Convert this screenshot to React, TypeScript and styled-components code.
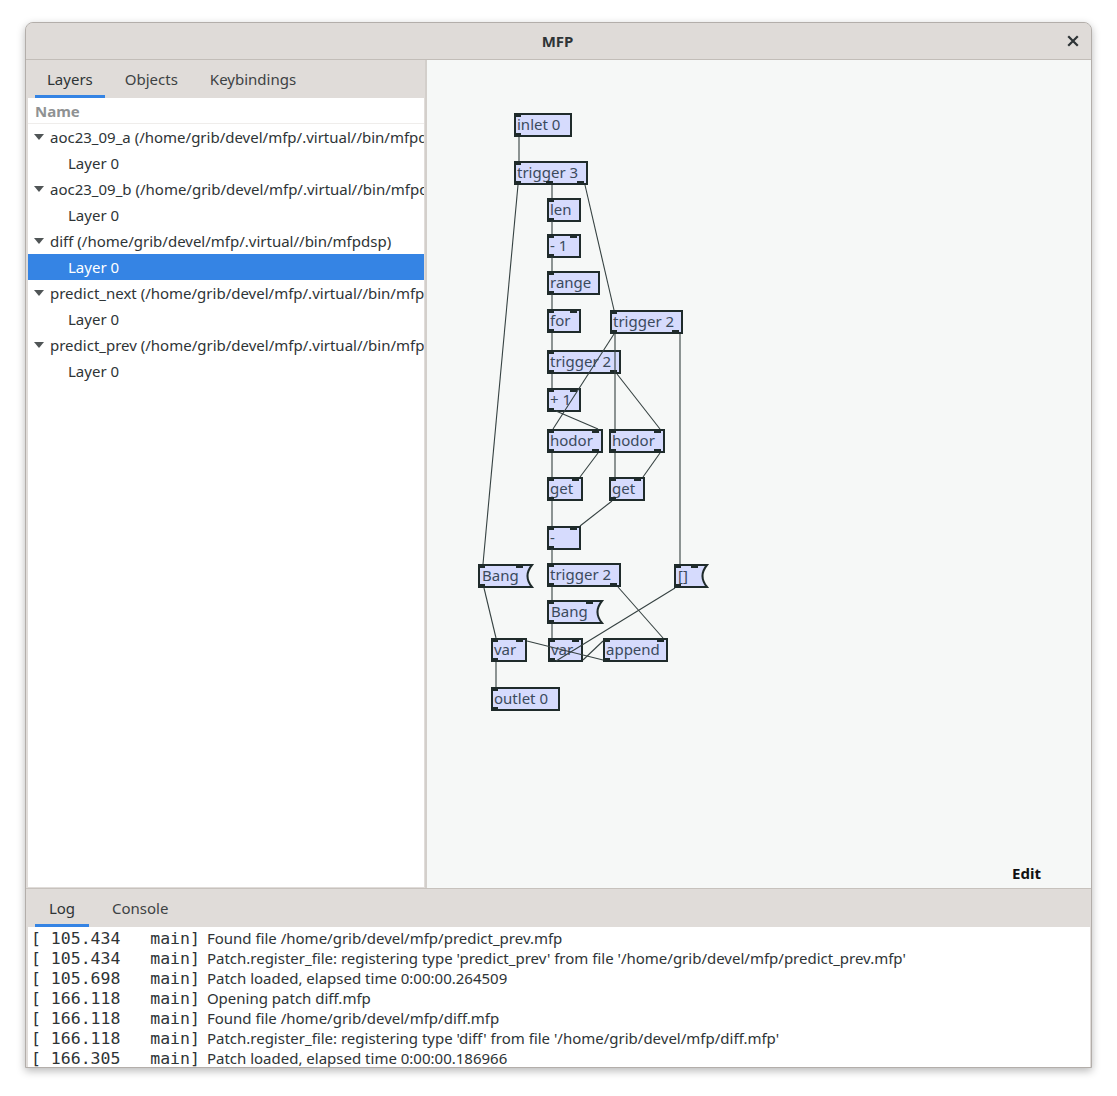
import React from 'react';
import styled, { createGlobalStyle } from 'styled-components';

const UI_FONT = `"Noto Sans", "Open Sans", "DejaVu Sans", sans-serif`;
const MONO = `"DejaVu Sans Mono", "Liberation Mono", monospace`;

const GlobalStyle = createGlobalStyle`
  html, body { margin: 0; padding: 0; background: #ffffff; }
  body { font-family: ${UI_FONT}; color: #2e3436; }
  * { box-sizing: border-box; }
`;

const Page = styled.div`
  padding: 22px 0 0 25px;
  width: 1117px;
  height: 1096px;
`;

const Window = styled.div`
  width: 1067px;
  height: 1046px;
  display: flex;
  flex-direction: column;
  border: 1px solid #b3aeaa;
  border-radius: 8px 8px 0 0;
  background: #e0dcd9;
  box-shadow: 0 3px 9px rgba(0, 0, 0, 0.28);
  overflow: hidden;
`;

const TitleBar = styled.header`
  height: 37px;
  flex: none;
  display: grid;
  grid-template-columns: 1fr auto 1fr;
  align-items: center;
  padding: 0 7px;
  background: #dfdbd8;
  border-bottom: 1px solid #c2bdb8;
`;

const Title = styled.div`
  grid-column: 2;
  font-size: 15px;
  font-weight: 700;
  color: #2e3436;
  margin-right: 2px;
`;

const CloseButton = styled.div`
  grid-column: 3;
  justify-self: end;
  width: 22px;
  height: 22px;
  display: flex;
  align-items: center;
  justify-content: center;
`;

const Main = styled.div`
  height: 828px;
  flex: none;
  display: flex;
`;

const LeftPane = styled.div`
  width: 399px;
  flex: none;
  display: flex;
  flex-direction: column;
  background: #e0dcd9;
`;

const TabBar = styled.div<{ $gap?: number }>`
  height: 38px;
  flex: none;
  display: flex;
  align-items: stretch;
  gap: ${(p) => p.$gap ?? 8}px;
  padding-left: 9px;
  background: #e0dcd9;
`;

const Tab = styled.div<{ $active?: boolean }>`
  min-width: 54px;
  padding: 0 12px;
  display: flex;
  align-items: center;
  justify-content: center;
  font-size: 15px;
  color: ${(p) => (p.$active ? '#2e3436' : '#3d4244')};
  box-shadow: ${(p) => (p.$active ? 'inset 0 -3px 0 #3584e4' : 'none')};
`;

const Tree = styled.div`
  flex: 1;
  margin: 0 1px 1px 2px;
  background: #ffffff;
  overflow: hidden;
`;

const TreeHeader = styled.div`
  height: 26px;
  display: flex;
  align-items: center;
  padding-left: 7px;
  font-size: 15px;
  font-weight: 700;
  color: #8f9293;
  border-bottom: 1px solid #efedeb;
`;

const TreeRow = styled.div<{ $child?: boolean; $selected?: boolean }>`
  height: 26px;
  display: flex;
  align-items: center;
  gap: 6px;
  padding-left: ${(p) => (p.$child ? '40px' : '6px')};
  font-size: 15px;
  white-space: nowrap;
  overflow: hidden;
  background: ${(p) => (p.$selected ? '#3584e4' : 'transparent')};
  color: ${(p) => (p.$selected ? '#ffffff' : '#2e3436')};
`;

const Expander = styled.span`
  flex: none;
  width: 0;
  height: 0;
  border-left: 5px solid transparent;
  border-right: 5px solid transparent;
  border-top: 6px solid #505556;
`;

const PaneSeparator = styled.div`
  width: 2px;
  flex: none;
  background: #d3cfcb;
`;

const Canvas = styled.div`
  position: relative;
  flex: 1;
  background: #f6f8f7;
  overflow: hidden;
`;

const Wires = styled.svg`
  position: absolute;
  left: 0;
  top: 0;
  width: 100%;
  height: 100%;
  pointer-events: none;
`;

const ObjBox = styled.div`
  position: absolute;
  height: 24px;
  background: #d6dbfd;
  border: 2px solid #1f2b2b;
  font-family: ${UI_FONT};
  font-size: 15px;
  line-height: 18px;
  color: #3b4a5c;
  padding-left: 1px;
  white-space: nowrap;
`;

const MsgBox = styled.div`
  position: absolute;
  height: 24px;
  font-family: ${UI_FONT};
  font-size: 15px;
  line-height: 22px;
  color: #3b4a5c;
  white-space: nowrap;
`;

const MsgShape = styled.svg`
  position: absolute;
  left: 0;
  top: 0;
  overflow: visible;
`;

const MsgLabel = styled.span`
  position: relative;
  padding-left: 4px;
`;

const Port = styled.span<{ $top: boolean }>`
  position: absolute;
  width: 7px;
  height: 4px;
  background: #1f2b2b;
  ${(p) => (p.$top ? 'top: -2px;' : 'bottom: -2px;')}
`;

const MsgPort = styled(Port)`
  ${(p) => (p.$top ? 'top: 0;' : 'bottom: 0;')}
`;

const ModeLabel = styled.div`
  position: absolute;
  right: 50px;
  bottom: 5px;
  font-size: 15px;
  font-weight: 700;
  color: #111;
`;

const HSeparator = styled.div`
  height: 1px;
  flex: none;
  background: #c7c2bd;
`;

const LogArea = styled.div`
  flex: 1;
  margin: 0 1px 0 2px;
  background: #ffffff;
  padding: 1px 0 0 3px;
  overflow: hidden;
`;

const LogLine = styled.div`
  height: 20px;
  display: flex;
  align-items: center;
  white-space: pre;
`;

const LogPrefix = styled.span`
  font-family: ${MONO};
  font-size: 16.5px;
  color: #2e3436;
`;

const LogMsg = styled.span`
  font-family: ${UI_FONT};
  font-size: 15px;
  color: #2e3436;
  margin-left: 7px;
`;

type NodeData = {
  label: string;
  x: number;
  y: number;
  w: number;
  ins: number;
  outs: number;
  msg?: boolean;
};

const OX = 427;
const OY = 60;

const nodes: NodeData[] = [
  { label: 'inlet 0', x: 514, y: 113, w: 58, ins: 1, outs: 1 },
  { label: 'trigger 3', x: 514, y: 161, w: 74, ins: 1, outs: 3 },
  { label: 'len', x: 547, y: 198, w: 34, ins: 1, outs: 1 },
  { label: '- 1', x: 547, y: 234, w: 34, ins: 2, outs: 1 },
  { label: 'range', x: 547, y: 271, w: 53, ins: 1, outs: 1 },
  { label: 'for', x: 547, y: 309, w: 34, ins: 2, outs: 1 },
  { label: 'trigger 2', x: 610, y: 310, w: 73, ins: 1, outs: 2 },
  { label: 'trigger 2', x: 547, y: 350, w: 74, ins: 1, outs: 2 },
  { label: '+ 1', x: 547, y: 388, w: 34, ins: 2, outs: 1 },
  { label: 'hodor', x: 547, y: 429, w: 56, ins: 2, outs: 2 },
  { label: 'hodor', x: 609, y: 429, w: 56, ins: 2, outs: 2 },
  { label: 'get', x: 547, y: 477, w: 36, ins: 2, outs: 1 },
  { label: 'get', x: 609, y: 477, w: 36, ins: 2, outs: 1 },
  { label: '-', x: 547, y: 526, w: 34, ins: 2, outs: 1 },
  { label: 'Bang', x: 478, y: 564, w: 55, ins: 2, outs: 1, msg: true },
  { label: 'trigger 2', x: 547, y: 563, w: 74, ins: 1, outs: 2 },
  { label: '[]', x: 674, y: 564, w: 34, ins: 2, outs: 1, msg: true },
  { label: 'Bang', x: 547, y: 600, w: 56, ins: 2, outs: 1, msg: true },
  { label: 'var', x: 491, y: 638, w: 36, ins: 2, outs: 1 },
  { label: 'var', x: 548, y: 638, w: 35, ins: 2, outs: 1 },
  { label: 'append', x: 603, y: 638, w: 65, ins: 2, outs: 1 },
  { label: 'outlet 0', x: 491, y: 687, w: 69, ins: 1, outs: 1 },
];

const wires: [number, number, number, number][] = [
  [519, 137, 519, 161],
  [518, 185, 483, 564],
  [552, 185, 552, 198],
  [585, 185, 614, 310],
  [552, 221, 552, 234],
  [552, 257, 552, 271],
  [552, 294, 552, 309],
  [552, 333, 552, 350],
  [552, 374, 552, 388],
  [614, 334, 553, 429],
  [615, 334, 615, 429],
  [617, 374, 660, 429],
  [556, 411, 598, 429],
  [552, 453, 552, 477],
  [598, 453, 580, 477],
  [615, 453, 615, 477],
  [660, 453, 643, 477],
  [552, 501, 552, 526],
  [612, 501, 580, 526],
  [552, 549, 552, 563],
  [680, 334, 680, 564],
  [552, 587, 552, 600],
  [618, 587, 663, 638],
  [675, 588, 556, 661],
  [552, 624, 552, 638],
  [484, 588, 496, 638],
  [527, 641, 603, 660],
  [583, 660, 603, 641],
  [496, 662, 496, 687],
];

function portXs(n: number, w: number, inset: number): number[] {
  if (n <= 1) return [0];
  const span = w - inset - 7;
  return Array.from({ length: n }, (_, i) => (span * i) / (n - 1));
}

function PatchNode({ node }: { node: NodeData }) {
  const pos = { left: node.x - OX, top: node.y - OY, width: node.w };
  if (node.msg) {
    const w = node.w;
    const ins = portXs(node.ins, w, 10);
    const outs = portXs(node.outs, w, 10);
    return (
      <MsgBox style={pos}>
        <MsgShape width={w} height={24}>
          <path
            d={`M1 1 H${w - 1} Q${w - 10} 12 ${w - 1} 23 H1 Z`}
            fill="#d6dbfd"
            stroke="#1f2b2b"
            strokeWidth={2}
          />
        </MsgShape>
        {ins.map((x, i) => (
          <MsgPort key={`i${i}`} $top style={{ left: x }} />
        ))}
        {outs.map((x, i) => (
          <MsgPort key={`o${i}`} $top={false} style={{ left: x }} />
        ))}
        <MsgLabel>{node.label}</MsgLabel>
      </MsgBox>
    );
  }
  const ins = portXs(node.ins, node.w - 4, 0);
  const outs = portXs(node.outs, node.w - 4, 0);
  return (
    <ObjBox style={pos}>
      {ins.map((x, i) => (
        <Port key={`i${i}`} $top style={{ left: x - 2 }} />
      ))}
      {outs.map((x, i) => (
        <Port key={`o${i}`} $top={false} style={{ left: x - 2 }} />
      ))}
      {node.label}
    </ObjBox>
  );
}

const treeRows: { text: string; child?: boolean; selected?: boolean }[] = [
  { text: 'aoc23_09_a (/home/grib/devel/mfp/.virtual//bin/mfpdsp)' },
  { text: 'Layer 0', child: true },
  { text: 'aoc23_09_b (/home/grib/devel/mfp/.virtual//bin/mfpdsp)' },
  { text: 'Layer 0', child: true },
  { text: 'diff (/home/grib/devel/mfp/.virtual//bin/mfpdsp)' },
  { text: 'Layer 0', child: true, selected: true },
  { text: 'predict_next (/home/grib/devel/mfp/.virtual//bin/mfpdsp)' },
  { text: 'Layer 0', child: true },
  { text: 'predict_prev (/home/grib/devel/mfp/.virtual//bin/mfpdsp)' },
  { text: 'Layer 0', child: true },
];

const logLines: [string, string][] = [
  ['[ 105.434   main]', 'Found file /home/grib/devel/mfp/predict_prev.mfp'],
  ['[ 105.434   main]', "Patch.register_file: registering type 'predict_prev' from file '/home/grib/devel/mfp/predict_prev.mfp'"],
  ['[ 105.698   main]', 'Patch loaded, elapsed time 0:00:00.264509'],
  ['[ 166.118   main]', 'Opening patch diff.mfp'],
  ['[ 166.118   main]', 'Found file /home/grib/devel/mfp/diff.mfp'],
  ['[ 166.118   main]', "Patch.register_file: registering type 'diff' from file '/home/grib/devel/mfp/diff.mfp'"],
  ['[ 166.305   main]', 'Patch loaded, elapsed time 0:00:00.186966'],
];

export default function App() {
  return (
    <>
      <GlobalStyle />
      <Page>
        <Window>
          <TitleBar>
            <Title>MFP</Title>
            <CloseButton>
              <svg width="12" height="12" viewBox="0 0 12 12">
                <path d="M2 2 L10 10 M10 2 L2 10" stroke="#2e3436" strokeWidth="2.2" strokeLinecap="square" />
              </svg>
            </CloseButton>
          </TitleBar>
          <Main>
            <LeftPane>
              <TabBar>
                <Tab $active>Layers</Tab>
                <Tab>Objects</Tab>
                <Tab>Keybindings</Tab>
              </TabBar>
              <Tree>
                <TreeHeader>Name</TreeHeader>
                {treeRows.map((r, i) => (
                  <TreeRow key={i} $child={r.child} $selected={r.selected}>
                    {!r.child && <Expander />}
                    {r.text}
                  </TreeRow>
                ))}
              </Tree>
            </LeftPane>
            <PaneSeparator />
            <Canvas>
              {nodes.map((n, i) => (
                <PatchNode key={i} node={n} />
              ))}
              <Wires>
                <g transform={`translate(${-OX} ${-OY})`}>
                  {wires.map(([x1, y1, x2, y2], i) => (
                    <line key={i} x1={x1} y1={y1} x2={x2} y2={y2} stroke="#354141" strokeWidth={1.1} />
                  ))}
                </g>
              </Wires>
              <ModeLabel>Edit</ModeLabel>
            </Canvas>
          </Main>
          <HSeparator />
          <TabBar $gap={11}>
            <Tab $active>Log</Tab>
            <Tab>Console</Tab>
          </TabBar>
          <LogArea>
            {logLines.map(([p, m], i) => (
              <LogLine key={i}>
                <LogPrefix>{p}</LogPrefix>
                <LogMsg>{m}</LogMsg>
              </LogLine>
            ))}
          </LogArea>
        </Window>
      </Page>
    </>
  );
}
